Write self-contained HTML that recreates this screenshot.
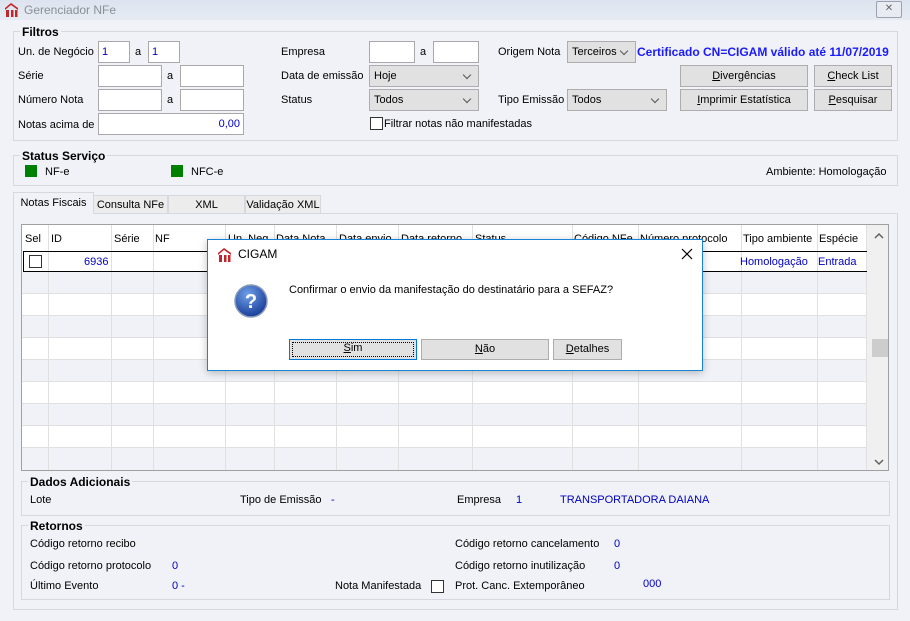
<!DOCTYPE html>
<html><head><meta charset="utf-8"><style>
*{box-sizing:border-box;margin:0;padding:0}
body{width:910px;height:621px;background:#f0f2f8;font-family:"Liberation Sans",sans-serif;font-size:11px;color:#000;position:relative;overflow:hidden}
.a{position:absolute;white-space:nowrap}
.t{position:absolute;white-space:nowrap;line-height:14px}
.in{position:absolute;background:#fff;border:1px solid #a8a8a8;height:22px;color:#0000c0;padding:3px 3px;line-height:14px}
.sel{position:absolute;background:#e1e1e1;border:1px solid #adadad;height:22px;padding:3px 4px;line-height:14px}
.sel:after{content:"";position:absolute;right:8px;top:6px;width:5px;height:5px;border-right:1px solid #555;border-bottom:1px solid #555;transform:rotate(45deg)}
.btn{position:absolute;background:#e1e1e1;border:1px solid #adadad;height:22px;text-align:center;line-height:20px}
.grp{position:absolute;border:1px solid #d5d8de}
.gl{position:absolute;font-weight:bold;font-size:12px;background:#f0f2f8;padding:0 2px;line-height:14px}
.cb{position:absolute;width:13px;height:13px;border:1px solid #333;background:#fff}
.blue{color:#0000c0}
u{text-decoration:underline}
</style></head><body>
<div class="a" style="left:0;top:0;width:910px;height:20px;background:linear-gradient(#dde4ef,#e6ebf3)"></div>
<svg class="a" style="left:4px;top:2px" width="15" height="16" viewBox="0 0 15 16"><path d="M1 6 L7 1 L14 6 L14 8 L7 3 L1 8Z" fill="#c0262c"/><rect x="2" y="8" width="3" height="7" fill="#c0262c"/><rect x="7" y="8" width="2.5" height="7" fill="#c0262c"/><rect x="11" y="8" width="2.5" height="7" fill="#c0262c"/></svg>
<div class="t" style="left:24px;top:3px;color:#8a8f98;font-size:12px">Gerenciador NFe</div>
<div class="a" style="left:876px;top:1px;width:26px;height:17px;border:1px solid #9aa2ad;background:#e8ecf2;border-radius:2px;text-align:center;line-height:14px;color:#666;font-size:10px">✕</div>

<div class="grp" style="left:13px;top:31px;width:885px;height:110px"></div>
<div class="gl" style="left:20px;top:25px">Filtros</div>
<div class="t" style="left:18px;top:45px">Un. de Negócio</div>
<div class="in" style="left:98px;top:41px;width:32px">1</div>
<div class="t" style="left:135px;top:45px">a</div>
<div class="in" style="left:148px;top:41px;width:32px">1</div>
<div class="t" style="left:18px;top:69px">Série</div>
<div class="in" style="left:98px;top:65px;width:64px"></div>
<div class="t" style="left:167px;top:69px">a</div>
<div class="in" style="left:180px;top:65px;width:64px"></div>
<div class="t" style="left:18px;top:93px">Número Nota</div>
<div class="in" style="left:98px;top:89px;width:64px"></div>
<div class="t" style="left:167px;top:93px">a</div>
<div class="in" style="left:180px;top:89px;width:64px"></div>
<div class="t" style="left:18px;top:118px">Notas acima de</div>
<div class="in" style="left:98px;top:113px;width:146px;text-align:right">0,00</div>

<div class="t" style="left:281px;top:45px">Empresa</div>
<div class="in" style="left:369px;top:41px;width:46px"></div>
<div class="t" style="left:420px;top:45px">a</div>
<div class="in" style="left:433px;top:41px;width:46px"></div>
<div class="t" style="left:281px;top:69px">Data de emissão</div>
<div class="sel" style="left:369px;top:65px;width:110px">Hoje</div>
<div class="t" style="left:281px;top:93px">Status</div>
<div class="sel" style="left:369px;top:89px;width:110px">Todos</div>
<div class="cb" style="left:370px;top:117px"></div>
<div class="t" style="left:384px;top:117px">Filtrar notas não manifestadas</div>

<div class="t" style="left:498px;top:45px">Origem Nota</div>
<div class="sel" style="left:567px;top:41px;width:69px">Terceiros</div>
<div class="t" style="left:637px;top:45px;color:#1a1aff;font-weight:bold;font-size:12px">Certificado CN=CIGAM válido até 11/07/2019</div>
<div class="btn" style="left:680px;top:65px;width:128px"><u>D</u>ivergências</div>
<div class="btn" style="left:814px;top:65px;width:78px"><u>C</u>heck List</div>
<div class="t" style="left:498px;top:93px">Tipo Emissão</div>
<div class="sel" style="left:567px;top:89px;width:100px">Todos</div>
<div class="btn" style="left:680px;top:89px;width:128px"><u>I</u>mprimir Estatística</div>
<div class="btn" style="left:814px;top:89px;width:78px"><u>P</u>esquisar</div>

<div class="grp" style="left:13px;top:155px;width:885px;height:31px"></div>
<div class="gl" style="left:20px;top:149px">Status Serviço</div>
<div class="a" style="left:25px;top:165px;width:12px;height:12px;background:#008000"></div>
<div class="t" style="left:45px;top:165px">NF-e</div>
<div class="a" style="left:171px;top:165px;width:12px;height:12px;background:#008000"></div>
<div class="t" style="left:191px;top:165px">NFC-e</div>
<div class="t" style="left:766px;top:165px">Ambiente: Homologação</div>

<div class="a" style="left:13px;top:213px;width:885px;height:397px;border:1px solid #d5d8de"></div>
<div class="a" style="left:93px;top:195px;width:75px;height:19px;border:1px solid #d5d8de;background:#ececec;text-align:center;line-height:18px">Consulta NFe</div>
<div class="a" style="left:168px;top:195px;width:77px;height:19px;border:1px solid #d5d8de;background:#ececec;text-align:center;line-height:18px">XML</div>
<div class="a" style="left:245px;top:195px;width:76px;height:19px;border:1px solid #d5d8de;background:#ececec;text-align:center;line-height:18px">Validação XML</div>
<div class="a" style="left:13px;top:192px;width:81px;height:22px;border:1px solid #d5d8de;border-bottom:none;background:#f0f2f8;text-align:center;line-height:20px">Notas Fiscais</div>

<div class="a" style="left:21px;top:224px;width:868px;height:247px;border:1px solid #a0a0a0;background:#fff;overflow:hidden">
<svg width="868" height="247" style="position:absolute;left:0;top:0">
<rect x="0" y="47" width="845" height="22" fill="#f0f2f8"/>
<rect x="0" y="91" width="845" height="22" fill="#f0f2f8"/>
<rect x="0" y="135" width="845" height="22" fill="#f0f2f8"/>
<rect x="0" y="179" width="845" height="22" fill="#f0f2f8"/>
<rect x="0" y="223" width="845" height="22" fill="#f0f2f8"/>
<g stroke="#e0e0e0" stroke-width="1">
<line x1="26.5" y1="0" x2="26.5" y2="247"/><line x1="89.5" y1="0" x2="89.5" y2="247"/><line x1="131.5" y1="0" x2="131.5" y2="247"/><line x1="203.5" y1="0" x2="203.5" y2="247"/><line x1="252.5" y1="0" x2="252.5" y2="247"/><line x1="314.5" y1="0" x2="314.5" y2="247"/><line x1="376.5" y1="0" x2="376.5" y2="247"/><line x1="450.5" y1="0" x2="450.5" y2="247"/><line x1="550.5" y1="0" x2="550.5" y2="247"/><line x1="616.5" y1="0" x2="616.5" y2="247"/><line x1="719.5" y1="0" x2="719.5" y2="247"/><line x1="795.5" y1="0" x2="795.5" y2="247"/><line x1="844.5" y1="0" x2="844.5" y2="247"/>
<line x1="0" y1="68.5" x2="845" y2="68.5"/><line x1="0" y1="90.5" x2="845" y2="90.5"/><line x1="0" y1="112.5" x2="845" y2="112.5"/><line x1="0" y1="134.5" x2="845" y2="134.5"/><line x1="0" y1="156.5" x2="845" y2="156.5"/><line x1="0" y1="178.5" x2="845" y2="178.5"/><line x1="0" y1="200.5" x2="845" y2="200.5"/><line x1="0" y1="222.5" x2="845" y2="222.5"/>
</g>
<rect x="1.5" y="26.5" width="847" height="20" fill="none" stroke="#000"/>
<rect x="845" y="0" width="23" height="247" fill="#f0f0f0"/>
<rect x="850" y="114" width="16" height="18" fill="#cdcdcd"/>
<path d="M853 13 L857 9 L861 13" fill="none" stroke="#606060" stroke-width="1.5"/>
<path d="M853 235 L857 239 L861 235" fill="none" stroke="#606060" stroke-width="1.5"/>
</svg>
<div class="t" style="left:3px;top:7px">Sel</div>
<div class="t" style="left:29px;top:7px">ID</div>
<div class="t" style="left:92px;top:7px">Série</div>
<div class="t" style="left:133px;top:7px">NF</div>
<div class="t" style="left:206px;top:7px">Un. Neg</div>
<div class="t" style="left:254px;top:7px">Data Nota</div>
<div class="t" style="left:317px;top:7px">Data envio</div>
<div class="t" style="left:379px;top:7px">Data retorno</div>
<div class="t" style="left:453px;top:7px">Status</div>
<div class="t" style="left:552px;top:7px">Código NFe</div>
<div class="t" style="left:618px;top:7px">Número protocolo</div>
<div class="t" style="left:721px;top:7px">Tipo ambiente</div>
<div class="t" style="left:797px;top:7px">Espécie</div>
<div class="cb" style="left:7px;top:30px"></div>
<div class="t blue" style="left:62px;top:30px">6936</div>
<div class="t blue" style="left:718px;top:30px">Homologação</div>
<div class="t blue" style="left:796px;top:30px">Entrada</div>
</div>

<div class="grp" style="left:21px;top:481px;width:869px;height:35px"></div>
<div class="gl" style="left:28px;top:475px">Dados Adicionais</div>
<div class="t" style="left:30px;top:493px">Lote</div>
<div class="t" style="left:240px;top:493px">Tipo de Emissão</div>
<div class="t blue" style="left:331px;top:493px">-</div>
<div class="t" style="left:457px;top:493px">Empresa</div>
<div class="t blue" style="left:516px;top:493px">1</div>
<div class="t blue" style="left:560px;top:493px">TRANSPORTADORA DAIANA</div>

<div class="grp" style="left:21px;top:525px;width:869px;height:75px"></div>
<div class="gl" style="left:28px;top:519px">Retornos</div>
<div class="t" style="left:30px;top:537px">Código retorno recibo</div>
<div class="t" style="left:30px;top:559px">Código retorno protocolo</div>
<div class="t blue" style="left:172px;top:559px">0</div>
<div class="t" style="left:30px;top:579px">Último Evento</div>
<div class="t blue" style="left:172px;top:579px">0 -</div>
<div class="t" style="left:335px;top:579px">Nota Manifestada</div>
<div class="cb" style="left:431px;top:580px"></div>
<div class="t" style="left:455px;top:537px">Código retorno cancelamento</div>
<div class="t blue" style="left:614px;top:537px">0</div>
<div class="t" style="left:455px;top:559px">Código retorno inutilização</div>
<div class="t blue" style="left:614px;top:559px">0</div>
<div class="t" style="left:455px;top:579px">Prot. Canc. Extemporâneo</div>
<div class="t blue" style="left:643px;top:577px">000</div>

<div class="a" style="left:207px;top:239px;width:496px;height:132px;background:#fff;border:1px solid #1883d7;box-shadow:0 2px 8px rgba(0,0,0,.25)"></div>
<svg class="a" style="left:217px;top:247px" width="15" height="16" viewBox="0 0 15 16"><path d="M1 6 L7 1 L14 6 L14 8 L7 3 L1 8Z" fill="#c0262c"/><rect x="2" y="8" width="3" height="7" fill="#c0262c"/><rect x="7" y="8" width="2.5" height="7" fill="#c0262c"/><rect x="11" y="8" width="2.5" height="7" fill="#c0262c"/></svg>
<div class="t" style="left:238px;top:247px;font-size:12px">CIGAM</div>
<svg class="a" style="left:681px;top:248px" width="12" height="12"><path d="M1 1L11 11M11 1L1 11" stroke="#000" stroke-width="1.2"/></svg>
<svg class="a" style="left:234px;top:284px" width="34" height="34"><defs><radialGradient id="g" cx="40%" cy="30%" r="70%"><stop offset="0" stop-color="#6fa0e8"/><stop offset="1" stop-color="#1a3f9a"/></radialGradient></defs><circle cx="17" cy="17" r="16" fill="url(#g)" stroke="#8a9bb8" stroke-width="1.5"/><text x="17" y="24" text-anchor="middle" font-family="Liberation Sans" font-weight="bold" font-size="20" fill="#fff">?</text></svg>
<div class="t" style="left:289px;top:283px">Confirmar o envio da manifestação do destinatário para a SEFAZ?</div>
<div class="btn" style="left:289px;top:339px;width:128px;height:21px;border:1px solid #0078d7;line-height:17px"><div style="position:absolute;left:2px;top:2px;right:2px;bottom:2px;border:1px dotted #000"></div><u>S</u>im</div>
<div class="btn" style="left:421px;top:339px;width:128px;height:21px;line-height:19px"><u>N</u>ão</div>
<div class="btn" style="left:553px;top:339px;width:69px;height:21px;line-height:19px"><u>D</u>etalhes</div>
</body></html>
